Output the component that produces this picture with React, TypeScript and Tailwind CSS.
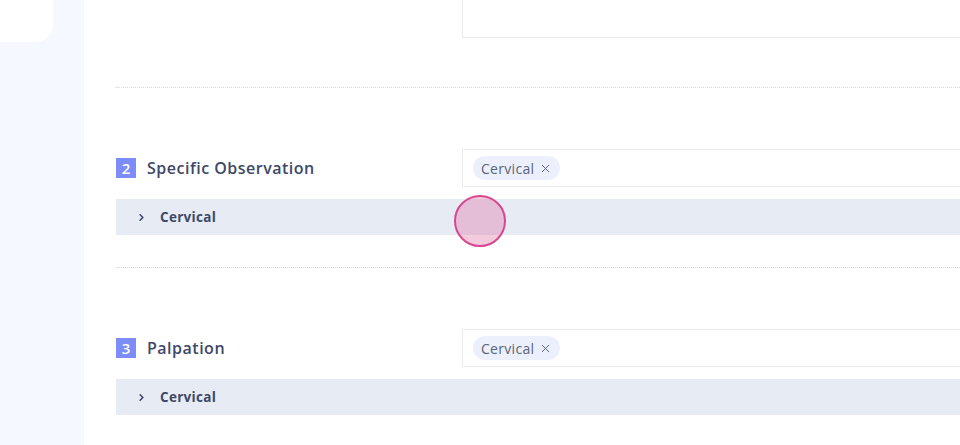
import { ChevronRight, X } from "lucide-react"

const SECTIONS = [
  { n: 2, title: "Specific Observation", tag: "Cervical" },
  { n: 3, title: "Palpation", tag: "Cervical" },
]

function Section({ n, title, tag, last }: { n: number; title: string; tag: string; last?: boolean }) {
  return (
    <div className={`pt-[61px] ${last ? "" : "pb-[32px] border-b border-dotted border-[#d5d9e2]"}`}>
      <div className="flex items-center">
        <div className="w-[346px] shrink-0 flex items-center gap-[11px]">
          <span className="w-5 h-5 flex items-center justify-center bg-[#7c8cf8] text-white text-[15px] font-semibold leading-none">
            {n}
          </span>
          <span className="text-[16px] font-semibold tracking-[0.5px] text-[#3e4868]">{title}</span>
        </div>
        <div className="w-[560px] shrink-0 h-[38px] border border-[#e8eaf0] flex items-center px-[10px]">
          <span className="flex items-center gap-[5px] h-6 px-[8px] rounded-full bg-[#eceffc] text-[14px] tracking-[0.3px] text-[#5b6477]">
            {tag}
            <X size={13} strokeWidth={1.8} />
          </span>
        </div>
      </div>
      <div className="mt-[12px] h-9 bg-[#e7ecf4] flex items-center pl-[20px] gap-[13px] text-[#3e4868]">
        <ChevronRight size={11} strokeWidth={3.5} />
        <span className="text-[13.5px] font-bold tracking-[0.3px]">{tag}</span>
      </div>
    </div>
  )
}

export default function App() {
  return (
    <div className="relative w-[960px] h-[445px] overflow-hidden flex bg-white" style={{ fontFamily: "'Open Sans', 'Noto Sans', sans-serif" }}>
      <aside className="w-[84px] shrink-0 bg-[#f5f8fe]">
        <div className="w-[53px] h-[42px] bg-white rounded-br-[18px]" />
      </aside>
      <main className="flex-1 pl-8 min-w-0">
        <div className="pb-[49px] border-b border-dotted border-[#d5d9e2]">
          <div className="flex">
            <div className="w-[346px] shrink-0" />
            <div className="w-[560px] shrink-0 h-[38px] border border-t-0 border-[#e8eaf0]" />
          </div>
        </div>
        {SECTIONS.map((s, i) => (
          <Section key={s.n} {...s} last={i === SECTIONS.length - 1} />
        ))}
      </main>
      <div className="absolute left-[454px] top-[195px] w-[52px] h-[52px] rounded-full border-2 border-[#d9478f] bg-[#e0689f]/35" />
    </div>
  )
}
